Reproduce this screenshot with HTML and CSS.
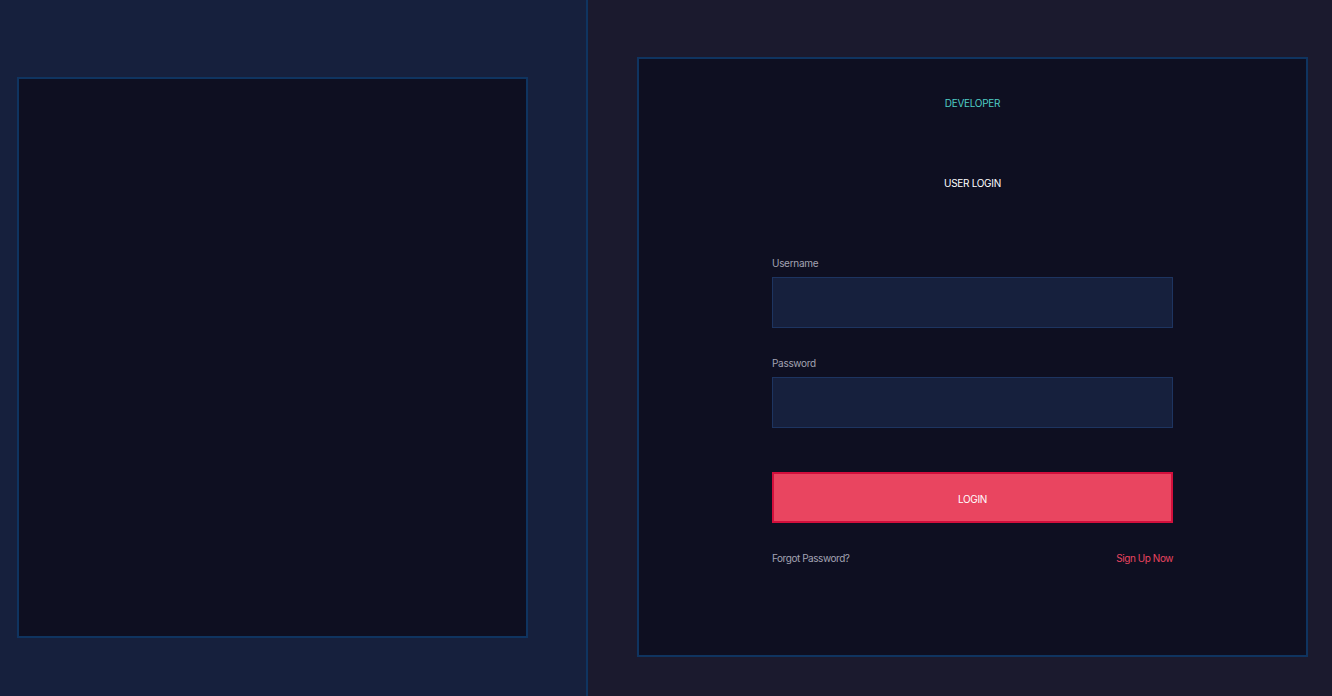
FILE: index.html
```html
<!DOCTYPE html>
<html>
<head>
    <title>User Login</title>
    <link rel="stylesheet" href="styles.css">
</head>
<body>
    <div class="side">
        <div class="preview"></div>
    </div>

    <div class="main">
        <div class="login-box">
            <div class="brand">DEVELOPER</div>
            <div class="title">USER LOGIN</div>

            <form class="login-form" onsubmit="return false">
                <label class="field-label" for="username">Username</label>
                <input class="field" id="username" type="text">

                <label class="field-label" for="password">Password</label>
                <input class="field" id="password" type="password">

                <button class="login-btn" type="submit">LOGIN</button>

                <div class="links">
                    <a href="#" class="forgot">Forgot Password?</a>
                    <a href="#" class="signup">Sign Up Now</a>
                </div>
            </form>
        </div>
    </div>
</body>
</html>
```

FILE: styles.css
```css
:root {
    --panel: #16203d;      /* Navy */
    --edge: #0f3460;       /* Blue border */
    --page: #1b1a2e;       /* Dark purple grey */
    --box: #0e0f21;        /* Near black */
    --accent: #e94560;     /* Pink red */
    --teal: #4ecdc4;
    --muted: #a3a3b3;
}

* {
    box-sizing: border-box;
}

body {
    margin: 0;
    height: 696px;
    display: flex;
    font-family: Inter, Roboto, 'Liberation Sans', sans-serif;
    font-size: 10px;
    color: var(--muted);
    background: var(--page);
}

.side {
    width: 588px;
    height: 100%;
    background: var(--panel);
    border-right: 2px solid var(--edge);
    padding: 77px 0 0 17px;
}

.preview {
    width: 511px;
    height: 561px;
    background: var(--box);
    border: 2px solid var(--edge);
}

.main {
    flex: 1;
    padding: 57px 0 0 49px;
}

.login-box {
    width: 671px;
    height: 600px;
    background: var(--box);
    border: 2px solid var(--edge);
    padding-top: 37px;
    display: flex;
    flex-direction: column;
    align-items: center;
}

.brand {
    line-height: 14px;
    color: var(--teal);
    letter-spacing: -0.3px;
}

.title {
    margin-top: 66px;
    line-height: 14px;
    color: #ffffff;
    letter-spacing: -0.3px;
}

.login-form {
    width: 401px;
    margin-top: 66px;
    display: flex;
    flex-direction: column;
}

.field-label {
    line-height: 14px;
    letter-spacing: -0.3px;
}

.field {
    margin: 7px 0 28px;
    height: 51px;
    background: var(--panel);
    border: 1px solid #1d3460;
    color: #ffffff;
    outline: none;
}

.login-btn {
    margin-top: 16px;
    height: 51px;
    background: var(--accent);
    border: 2px solid #d20f3c;
    color: #ffffff;
    font-family: inherit;
    font-size: 10px;
    letter-spacing: -0.3px;
    padding-top: 3px;
    cursor: pointer;
}

.links {
    margin-top: 28px;
    line-height: 14px;
    display: flex;
    justify-content: space-between;
}

.links a {
    text-decoration: none;
    letter-spacing: -0.45px;
}

.forgot {
    color: var(--muted);
}

.signup {
    color: var(--accent);
}
```
